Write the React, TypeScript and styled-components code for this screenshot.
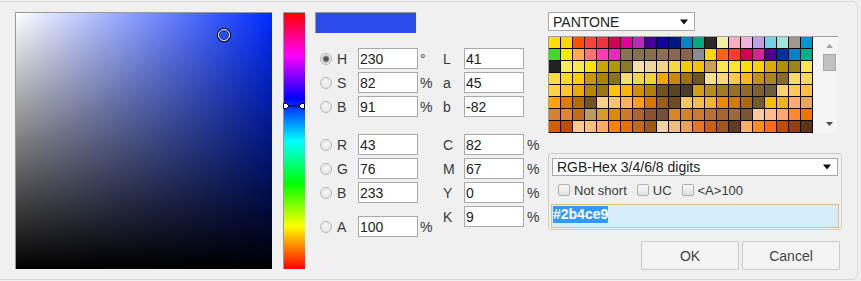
import React from "react";
import styled, { createGlobalStyle } from "styled-components";

const GlobalStyle = createGlobalStyle`
  html, body { margin: 0; padding: 0; background: #f0f0f0; }
  body { font-family: "Liberation Sans", Arial, sans-serif; font-size: 14px; color: #333; }
  * { box-sizing: border-box; }
`;

const HUE_COLOR = "#002bff";
const CURRENT = "#2b4ce9";

const PALETTE: string[][] = [
  ["#fedd00","#ffd700","#fe5000","#f9423a","#ef3340","#ce0058","#e10098","#bb29bb","#440099","#10069f","#001489","#0085ca","#00ab84","#2d2926","#f3f0a0","#fcaec0","#f1b2dc","#c19fe0","#71d2ea","#9ee6d8","#a09890","#0096d1"],
  ["#44d62c","#ffe900","#ffaa4d","#ff7276","#ff3eb5","#ea27c2","#84754e","#85714d","#866d4b","#8b6f4e","#87674f","#8b634b","#8a8d8f","#ffd700","#ff6310","#fa3c2d","#d2005a","#d62598","#4f0090","#0033a0","#0083ca","#00b08c"],
  ["#212322","#f6eb61","#f7ea48","#fce300","#c5a900","#af9800","#897a27","#f5e1a4","#ecd898","#eed484","#f4da40","#f2cd00","#f1c400","#cba052","#fbe74a","#fde625","#fedd00","#ffd200","#dcaa00","#b09000","#9b821a","#fbe452"],
  ["#fbdd40","#fdda24","#ffcd00","#c99700","#ac8400","#897322","#f3dd6d","#f3d54e","#f3d03e","#f2a900","#cc8a00","#a07400","#6c571b","#f8e08e","#fbd872","#ffc845","#ffb81c","#c69214","#ad841f","#886b25","#fbdb65","#fdd757"],
  ["#fed141","#ffc72c","#eaaa00","#b58500","#9a7611","#ffc600","#ffb500","#d19000","#b47e00","#73531d","#5a4522","#4b3d2a","#d29f13","#b78b20","#9f7d23","#967125","#8f6a2a","#7d622e","#6c5d34","#fdd26e","#ffc658","#ffbf3f"],
  ["#ffa300","#de7c00","#af6d04","#74531c","#fdd086","#ffc56e","#ffb25b","#ff9e1b","#d57800","#996017","#6e4c1e","#f2c75c","#f1be48","#f1b434","#ed8b00","#cf7f00","#a76d11","#715c2a","#f6be00","#f0b323","#fead77","#e6a65d"],
  ["#d38235","#dc8633","#c16c18","#bd9b60","#d69a2d","#db8a06","#cd7925","#ad6433","#89532f","#775135","#d78825","#d3832b","#c67d30","#b67237","#a7662b","#9e6a38","#7a5533","#ffc89d","#ffbc8b","#ffa76c","#fb8a2e","#ee7600"],
  ["#d45f00","#be4d00","#fec98b","#ffc27b","#ffae62","#ff8200","#e87200","#c26a14","#9b5a1a","#f0d49e","#f0be7c","#eca154","#e87722","#cb6015","#a1561c","#603d20","#ffad65","#ff8f1c","#ff6a14","#c04c00","#904015","#5e3519"],
];

type Field = { key: string; label: string; value: string; unit?: string; checked?: boolean; gap: number };

const LEFT_FIELDS: Field[] = [
  { key: "h", label: "H", value: "230", unit: "°", checked: true, gap: 0 },
  { key: "s", label: "S", value: "82", unit: "%", gap: 3 },
  { key: "v", label: "B", value: "91", unit: "%", gap: 3 },
  { key: "r", label: "R", value: "43", gap: 17 },
  { key: "g", label: "G", value: "76", gap: 3 },
  { key: "b", label: "B", value: "233", gap: 3 },
  { key: "a", label: "A", value: "100", unit: "%", gap: 13 },
];

const RIGHT_FIELDS: Field[] = [
  { key: "l", label: "L", value: "41", gap: 0 },
  { key: "la", label: "a", value: "45", gap: 3 },
  { key: "lb", label: "b", value: "-82", gap: 3 },
  { key: "c", label: "C", value: "82", unit: "%", gap: 17 },
  { key: "m", label: "M", value: "67", unit: "%", gap: 3 },
  { key: "y", label: "Y", value: "0", unit: "%", gap: 3 },
  { key: "k", label: "K", value: "9", unit: "%", gap: 3 },
];

const Dialog = styled.div`
  margin-top: 1px;
  width: 858px;
  height: 279px;
  border: 1px solid #d9d9d9;
  border-left: none;
  border-radius: 0 6px 6px 0;
  background: #f0f0f0;
  padding: 10px 15px 0 15px;
  display: flex;
  align-items: flex-start;
`;

const SVPanel = styled.div`
  position: relative;
  flex: none;
  width: 257px;
  height: 257px;
  border-top: 1px solid #999;
  border-left: 1px solid #999;
  background:
    linear-gradient(to top, #000, rgba(0, 0, 0, 0)),
    linear-gradient(to right, #fff, rgba(255, 255, 255, 0)),
    ${HUE_COLOR};
`;

const SVMarker = styled.div`
  position: absolute;
  left: 202px;
  top: 16px;
  width: 12px;
  height: 12px;
  border-radius: 50%;
  border: 1px solid #fff;
  box-shadow: 0 0 0 1px #000, inset 0 0 0 1px rgba(0, 0, 0, 0.55);
`;

const HueBar = styled.div`
  position: relative;
  flex: none;
  margin-left: 11px;
  width: 22px;
  height: 257px;
  border-top: 1px solid #999;
  border-left: 1px solid #999;
  background: linear-gradient(
    to bottom,
    #f00 0%,
    #f0f 16.667%,
    #00f 33.333%,
    #0ff 50%,
    #0f0 66.667%,
    #ff0 83.333%,
    #f00 100%
  );
`;

const HueMarker = styled.svg`
  position: absolute;
  left: -1px;
  top: 89px;
`;

const MiddleCol = styled.div`
  flex: none;
  margin-left: 10px;
  width: 233px;
  display: flex;
  flex-direction: column;
`;

const Swatch = styled.div`
  width: 101px;
  height: 21px;
  border-top: 1px solid #999;
  border-left: 1px solid #999;
  background: ${CURRENT};
`;

const Fields = styled.div`
  display: flex;
  margin-top: 15px;
`;

const FieldCol = styled.div`
  display: flex;
  flex-direction: column;
`;

const FieldRow = styled.div<{ $gap: number }>`
  display: flex;
  align-items: center;
  height: 21px;
  margin-top: ${(p) => p.$gap}px;
`;

const Radio = styled.span<{ $checked?: boolean }>`
  flex: none;
  width: 12px;
  height: 12px;
  margin-left: 5px;
  border-radius: 50%;
  border: 1px solid #b8b8b8;
  background: ${(p) =>
    p.$checked
      ? "radial-gradient(circle, #4a4a4a 0, #5a5a5a 2px, #9a9a9a 3px, #e6e6e6 4px, #f2f2f2 100%)"
      : "radial-gradient(circle at 50% 40%, #f6f6f6 0, #e9e9e9 60%, #d8d8d8 100%)"};
`;

const ChannelLabel = styled.span<{ $side?: boolean }>`
  flex: none;
  width: ${(p) => (p.$side ? 22 : 26)}px;
  padding-left: ${(p) => (p.$side ? 1 : 5)}px;
  font-size: 14px;
  color: #3a3a3a;
`;

const NumInput = styled.input`
  flex: none;
  width: 60px;
  height: 21px;
  margin: 0;
  border: 1px solid #a9a9a9;
  padding: 0 1px;
  background: #fff;
  font-family: "Liberation Sans", Arial, sans-serif;
  font-size: 14px;
  color: #222;
  outline: none;
`;

const Unit = styled.span<{ $side?: boolean }>`
  flex: none;
  width: 24px;
  padding-left: ${(p) => (p.$side ? 3 : 2)}px;
  font-size: 14px;
  color: #3a3a3a;
`;

const RightCol = styled.div`
  flex: none;
  width: 294px;
  display: flex;
  flex-direction: column;
`;

const SetSelect = styled.div`
  width: 147px;
  height: 19px;
  border: 1px solid #a9a9a9;
  background: #fff;
  display: flex;
  align-items: center;
  justify-content: space-between;
  padding: 0 6px 0 4px;
  font-size: 14px;
  color: #222;
`;

const PaletteBox = styled.div`
  margin-top: 5px;
  width: 290px;
  height: 97px;
  border-top: 1px solid #a0a0a0;
  border-left: 1px solid #a0a0a0;
  background: #f5f5f5;
  display: flex;
  overflow: hidden;
`;

const SwatchGrid = styled.div`
  flex: none;
  display: grid;
  grid-template-columns: repeat(22, 11px);
  grid-auto-rows: 11px;
  gap: 1px;
  padding: 0 1px 1px 0;
  background: #000;
  height: 96px;
  width: 264px;
`;

const Cell = styled.div`
  width: 11px;
  height: 11px;
`;

const ScrollTrack = styled.div`
  flex: none;
  width: 25px;
  padding-left: 7px;
  display: flex;
  flex-direction: column;
  align-items: center;
`;

const ArrowIcon = styled.svg<{ $top?: number; $bottom?: number }>`
  flex: none;
  display: block;
  margin-top: ${(p) => p.$top ?? 0}px;
  margin-bottom: ${(p) => p.$bottom ?? 0}px;
`;

const Thumb = styled.div`
  flex: none;
  margin-top: 6px;
  width: 13px;
  height: 17px;
  background: #c1c1c1;
  border: 1px solid #a8a8a8;
`;

const Spacer = styled.div`
  flex: 1;
`;

const FormatBox = styled.div`
  margin-top: 20px;
  width: 294px;
  height: 77px;
  border: 1px solid #cdcdcd;
  border-radius: 3px;
  padding: 4px 3px 1px 3px;
  display: flex;
  flex-direction: column;
`;

const FormatSelect = styled.div`
  height: 18px;
  border: 1px solid #a9a9a9;
  background: #fff;
  display: flex;
  align-items: center;
  justify-content: space-between;
  padding: 0 6px 0 4px;
  font-size: 14px;
  color: #222;
`;

const CheckRow = styled.div`
  height: 28px;
  display: flex;
  align-items: center;
  padding-left: 6px;
`;

const CheckItem = styled.label`
  display: flex;
  align-items: center;
  margin-right: 10px;
  font-size: 13px;
  color: #3a3a3a;
`;

const CheckBox = styled.span`
  flex: none;
  width: 12px;
  height: 12px;
  margin-right: 4px;
  border: 1px solid #b0b0b0;
  border-radius: 2px;
  background: linear-gradient(#f7f7f7, #e1e1e1);
`;

const HexField = styled.div`
  height: 24px;
  margin: 0 -1px;
  border: 1px solid #e2c276;
  background: #d6eefc;
  padding: 1px 1px 0 1px;
  display: flex;
  align-items: flex-start;
`;

const Selected = styled.span`
  background: #3399ff;
  color: #fff;
  font-weight: bold;
  font-size: 14px;
  line-height: 17px;
`;

const ButtonRow = styled.div`
  margin-top: 11px;
  display: flex;
  justify-content: flex-end;
  gap: 3px;
  padding-right: 2px;
`;

const Button = styled.button`
  width: 98px;
  height: 29px;
  margin: 0;
  border: 1px solid #cacaca;
  border-radius: 2px;
  background: #f4f4f4;
  font-family: "Liberation Sans", Arial, sans-serif;
  font-size: 14px;
  color: #444;
  padding: 0;
`;

const DropArrow = () => (
  <svg width="8" height="6" viewBox="0 0 8 6">
    <polygon points="0,0.5 8,0.5 4,5.5" fill="#111" />
  </svg>
);

const FieldLine = ({ f, side }: { f: Field; side?: boolean }) => (
  <FieldRow $gap={f.gap}>
    {!side && <Radio $checked={f.checked} />}
    <ChannelLabel $side={side}>{f.label}</ChannelLabel>
    <NumInput readOnly value={f.value} />
    <Unit $side={side}>{f.unit ?? ""}</Unit>
  </FieldRow>
);

export default function App() {
  return (
    <>
      <GlobalStyle />
      <Dialog>
        <SVPanel>
          <SVMarker />
        </SVPanel>
        <HueBar>
          <HueMarker width="22" height="8" viewBox="0 0 22 8">
            <line x1="6" y1="4" x2="16" y2="4" stroke="#000" strokeWidth="1" />
            <polygon points="0.5,1.5 3.5,1.5 6,4 3.5,6.5 0.5,6.5" fill="#fff" stroke="#000" strokeWidth="1" />
            <polygon points="21.5,1.5 18.5,1.5 16,4 18.5,6.5 21.5,6.5" fill="#fff" stroke="#000" strokeWidth="1" />
          </HueMarker>
        </HueBar>
        <MiddleCol>
          <Swatch />
          <Fields>
            <FieldCol>
              {LEFT_FIELDS.map((f) => (
                <FieldLine key={f.key} f={f} />
              ))}
            </FieldCol>
            <FieldCol>
              {RIGHT_FIELDS.map((f) => (
                <FieldLine key={f.key} f={f} side />
              ))}
            </FieldCol>
          </Fields>
        </MiddleCol>
        <RightCol>
          <SetSelect>
            <span>PANTONE</span>
            <DropArrow />
          </SetSelect>
          <PaletteBox>
            <SwatchGrid>
              {PALETTE.flat().map((c, i) => (
                <Cell key={i} style={{ background: c }} />
              ))}
            </SwatchGrid>
            <ScrollTrack>
              <ArrowIcon width="7" height="4" viewBox="0 0 7 4" $top={7}>
                <polygon points="0,4 7,4 3.5,0" fill="#a3a3a3" />
              </ArrowIcon>
              <Thumb />
              <Spacer />
              <ArrowIcon width="7" height="4" viewBox="0 0 7 4" $bottom={7}>
                <polygon points="0,0 7,0 3.5,4" fill="#505050" />
              </ArrowIcon>
            </ScrollTrack>
          </PaletteBox>
          <FormatBox>
            <FormatSelect>
              <span>RGB-Hex 3/4/6/8 digits</span>
              <DropArrow />
            </FormatSelect>
            <CheckRow>
              <CheckItem>
                <CheckBox />
                Not short
              </CheckItem>
              <CheckItem>
                <CheckBox />
                UC
              </CheckItem>
              <CheckItem>
                <CheckBox />
                {"<A>100"}
              </CheckItem>
            </CheckRow>
            <HexField>
              <Selected>#2b4ce9</Selected>
            </HexField>
          </FormatBox>
          <ButtonRow>
            <Button>OK</Button>
            <Button>Cancel</Button>
          </ButtonRow>
        </RightCol>
      </Dialog>
    </>
  );
}
